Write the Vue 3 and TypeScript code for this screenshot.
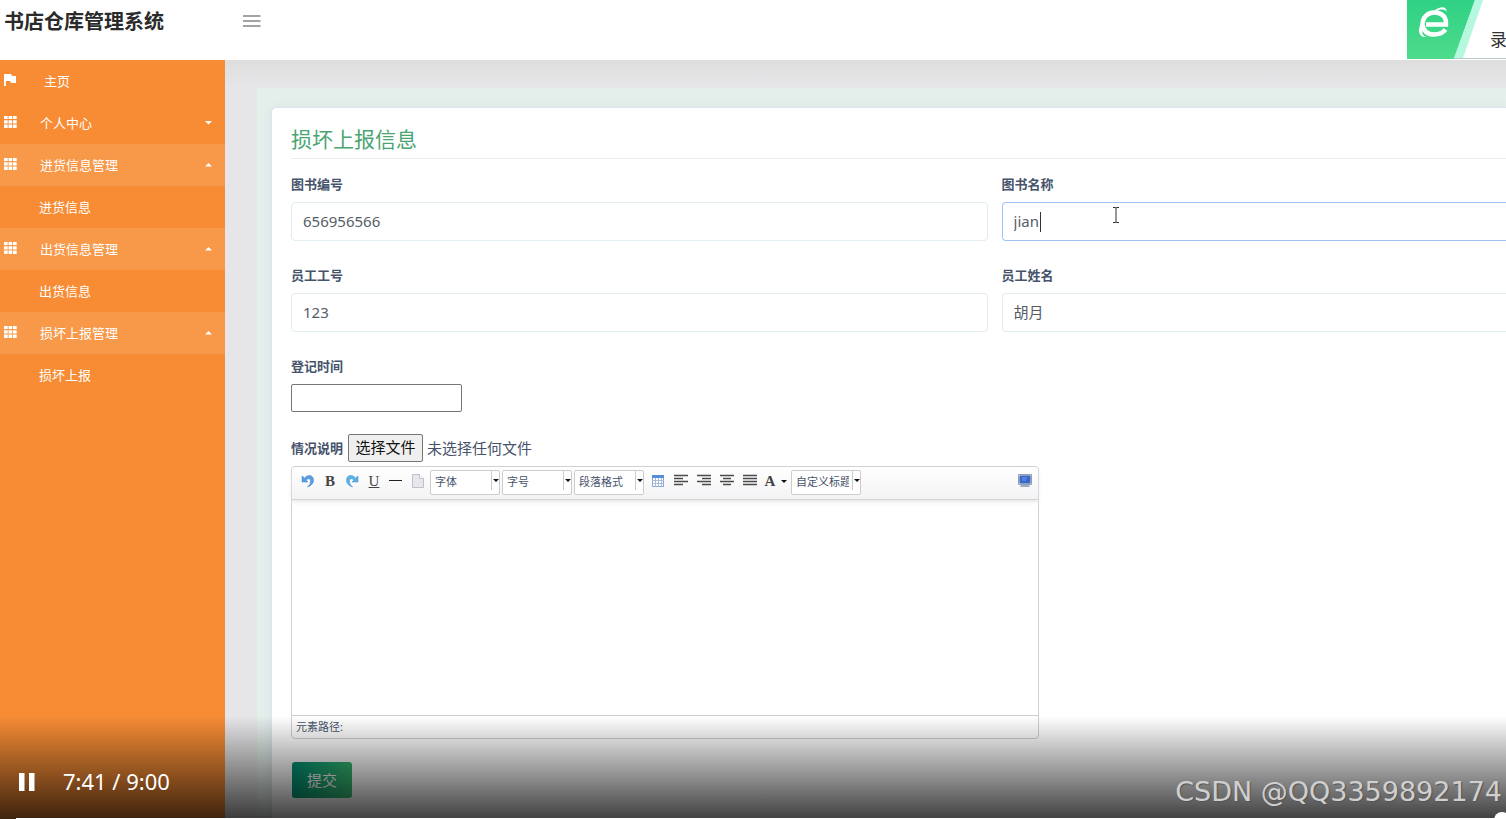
<script setup lang="ts">
import { ref } from 'vue'

interface MenuEntry {
  text: string
  kind: 'home' | 'group' | 'child'
  open?: boolean
}

const menu: MenuEntry[] = [
  { text: '主页', kind: 'home' },
  { text: '个人中心', kind: 'group' },
  { text: '进货信息管理', kind: 'group', open: true },
  { text: '进货信息', kind: 'child' },
  { text: '出货信息管理', kind: 'group', open: true },
  { text: '出货信息', kind: 'child' },
  { text: '损坏上报管理', kind: 'group', open: true },
  { text: '损坏上报', kind: 'child' },
]

const fields = ref([
  { id: 'book-no', label: '图书编号', value: '656956566' },
  { id: 'book-name', label: '图书名称', value: 'jian', active: true },
  { id: 'staff-no', label: '员工工号', value: '123' },
  { id: 'staff-name', label: '员工姓名', value: '胡月' },
])
const date = ref('')

const aligns = [
  { name: '左对齐', d: 'M0 1.5h14M0 4.5h9M0 7.5h14M0 10.5h9' },
  { name: '右对齐', d: 'M0 1.5h14M5 4.5h9M0 7.5h14M5 10.5h9' },
  { name: '居中对齐', d: 'M0 1.5h14M3 4.5h8M0 7.5h14M3 10.5h8' },
  { name: '两端对齐', d: 'M0 1.5h14M0 4.5h14M0 7.5h14M0 10.5h14' },
]
</script>

<template>
  <div class="page">
    <header class="topbar">
      <h1 class="brand">书店仓库管理系统</h1>
      <button class="burger" type="button" aria-label="菜单">
        <svg width="18" height="12" viewBox="0 0 18 12"><path d="M0 1h17.500M0 6h17.500M0 11h17.500" stroke="#858585" stroke-width="1.700" /></svg>
      </button>
      <div class="recorder">
        <svg width="99" height="60" viewBox="0 0 99 60">
          <defs>
            <linearGradient id="green" x1="0" y1="0" x2="0" y2="1">
              <stop offset="0" stop-color="#2fd184" />
              <stop offset="1" stop-color="#4edb8c" />
            </linearGradient>
          </defs>
          <path d="M0 0H68L47 59H0Z" fill="url(#green)" />
          <path d="M68 0H76L56 58H47Z" fill="#b5f7df" />
          <path d="M47 58.500H99" stroke="#b9c8c2" />
          <path d="M19 24.500H39C39.500 17 35 12.500 27.500 12.500C20 12.500 15.500 18 15.500 24C15.500 30.500 20.500 34.500 27 34.500C32 34.500 36 33 38.500 29.500" fill="none" stroke="#fff" stroke-width="4.500" />
          <path d="M27 11C33 6 40 6 39.500 12C38 9 34 9 30 11ZM14 23C10 31 12 38 20 37C15 36 14 32 17 28Z" fill="#fff" />
        </svg>
        <span class="recorder-text">录</span>
      </div>
    </header>

    <div class="body">
      <nav class="sidebar">
        <a v-for="m in menu" :key="m.text" href="#" class="item" :class="[m.kind, { open: m.open }]">
          <svg v-if="m.kind === 'home'" class="icon" width="13" height="13" viewBox="0 0 13 13"><path d="M0 0H7L8 2H12V9H7L6 7H2V12H0Z" fill="#fff" /></svg>
          <svg v-if="m.kind === 'group'" class="icon" width="13" height="12" viewBox="0 0 13 12"><path d="M0 0H3.700V3H0ZM4.500 0H8.200V3H4.500ZM9 0H12.700V3H9ZM0 4.300H3.700V7.500H0ZM4.500 4.300H8.200V7.500H4.500ZM9 4.300H12.700V7.500H9ZM0 8.600H3.700V12H0ZM4.500 8.600H8.200V12H4.500ZM9 8.600H12.700V12H9Z" fill="#fff" /></svg>
          <span>{{ m.text }}</span>
          <svg v-if="m.kind === 'group'" class="caret" width="7" height="4" viewBox="0 0 7 4"><path :d="m.open ? 'M0 3.500L3.500 0L7 3.500Z' : 'M0 0L3.500 3.500L7 0Z'" fill="#fff" /></svg>
        </a>
      </nav>

      <main class="content">
        <div class="panel">
          <form class="card" @submit.prevent>
            <h2 class="title">损坏上报信息</h2>
            <div class="grid">
              <div v-for="f in fields" :key="f.id" class="field" :class="{ active: f.active }">
                <label :for="f.id">{{ f.label }}</label>
                <input :id="f.id" v-model="f.value" class="control" type="text" autocomplete="off" spellcheck="false">
              </div>
            </div>
            <div class="field date-field">
              <label for="date">登记时间</label>
              <input id="date" v-model="date" class="date" type="text">
            </div>
            <div class="file-row">
              <label for="file">情况说明</label>
              <button id="file" class="file" type="button">选择文件</button>
              <span class="file-name">未选择任何文件</span>
            </div>

            <section class="editor">
              <div class="toolbar">
                <button class="tool" type="button" aria-label="撤销">
                  <svg width="14" height="14" viewBox="0 0 14 14"><path d="M1 2V8H7L5 6C8 3.500 10 5 9.500 8C9.300 10 8 11.500 6.500 13C10 12 13 9 12.500 5.500C12 1 7 0 3.500 4Z" fill="#5b9fe0" stroke="#3e7fc4" stroke-width=".5" /></svg>
                </button>
                <button class="tool letter" type="button">B</button>
                <button class="tool" type="button" aria-label="重做">
                  <svg width="14" height="14" viewBox="0 0 14 14"><path d="M13 2V8H7L9 6C6 3.500 4 5 4.500 8C4.700 10 6 11.500 7.500 13C4 12 1 9 1.500 5.500C2 1 7 0 10.500 4Z" fill="#5bb1e6" stroke="#3e8fca" stroke-width=".5" /></svg>
                </button>
                <button class="tool letter under" type="button">U</button>
                <button class="tool" type="button" aria-label="分隔线">
                  <svg width="14" height="14" viewBox="0 0 14 14"><path d="M0 6.500H13" stroke="#222" /></svg>
                </button>
                <button class="tool last" type="button" aria-label="新建">
                  <svg width="14" height="14" viewBox="0 0 14 14"><path d="M1.500 .5H8.500L12.500 4.500V13.500H1.500Z" fill="#e6e8ee" stroke="#bfc1c7" /><path d="M8.500 .5V4.500H12.500" fill="#fff" stroke="#bfc1c7" /></svg>
                </button>
                <button class="combo" type="button"><span>字体</span><i></i></button>
                <button class="combo" type="button"><span>字号</span><i></i></button>
                <button class="combo" type="button"><span>段落格式</span><i></i></button>
                <button class="tool wide" type="button" aria-label="表格">
                  <svg width="14" height="14" viewBox="0 0 14 14"><path d="M1.500 1.500H12.500V12.500H1.500Z" fill="#fff" stroke="#7fa2cf" /><path d="M1 1H13V4H1Z" fill="#568bdc" /><path d="M1 6.500H13M1 9.500H13M4.500 4V13M7.500 4V13M10.500 4V13" stroke="#a9bdd8" /></svg>
                </button>
                <button v-for="a in aligns" :key="a.name" class="tool wide" type="button" :aria-label="a.name">
                  <svg width="14" height="14" viewBox="0 0 14 14"><path :d="a.d" stroke="#4a4a4a" stroke-width="1.300" /></svg>
                </button>
                <button class="tool letter color" type="button">A<i class="arrow"></i></button>
                <button class="combo" type="button"><span>自定义标题</span><i></i></button>
                <button class="tool screen" type="button" aria-label="全屏">
                  <svg width="14" height="14" viewBox="0 0 14 14"><path d="M.5 .5H13.500V10.500H.5Z" fill="#c8d1de" stroke="#8fa0b8" /><path d="M2 2H12V9H2Z" fill="#3567cf" stroke="#4a6cb4" /><path d="M4 4H9M4 6H8" stroke="#6f9cf0" /><path d="M3 11H11L12 13H2Z" fill="#9facc0" /></svg>
                </button>
              </div>
              <textarea class="area" aria-label="情况说明内容"></textarea>
              <div class="path">元素路径:</div>
            </section>

            <button class="submit" type="submit">提交</button>
          </form>
        </div>
      </main>
    </div>

    <svg class="pointer" width="8" height="16" viewBox="0 0 8 16"><path d="M1 .5H3.500Q4 .5 4 1.500V14.500Q4 15.500 3.500 15.500H1M7 .5H4.500Q4 .5 4 1.500M7 15.500H4.500Q4 15.500 4 14.500" fill="none" stroke="#333" /></svg>

    <div class="player">
      <button class="pause" type="button" aria-label="暂停">
        <svg width="16" height="18" viewBox="0 0 16 18"><path d="M0 0H5.500V18H0ZM10 0H15.500V18H10Z" fill="#fff" /></svg>
      </button>
      <span class="time">7:41 / 9:00</span>
      <span class="mark">CSDN @QQ3359892174</span>
      <div class="track"></div>
      <div class="knob"></div>
    </div>
  </div>
</template>

<style>
body {
  margin: 0;
}
</style>

<style scoped>
.page {
  position: relative;
  display: flex;
  flex-direction: column;
  height: 100vh;
  overflow: hidden;
  background: #fff;
  color: #46536a;
  font-family: "Noto Sans", "Noto Sans CJK SC", sans-serif;
}
.page * {
  box-sizing: border-box;
}
button,
input,
textarea {
  font-family: inherit;
  margin: 0;
}
button {
  padding: 0;
  border: 0;
  background: none;
}
svg {
  display: block;
}
.topbar {
  flex: none;
  display: flex;
  align-items: flex-start;
  height: 60px;
}
.brand {
  width: 243px;
  margin: 0;
  padding: 7px 0 0 4px;
  font-size: 20px;
  line-height: 30px;
  font-weight: 700;
  color: #2b2b2b;
}
.burger {
  padding-top: 15px;
}
.recorder {
  position: relative;
  margin-left: auto;
  width: 99px;
  height: 60px;
  overflow: hidden;
}
.recorder-text {
  position: absolute;
  left: 83px;
  top: 29px;
  font-size: 17px;
  line-height: 22px;
  color: #333;
}
.body {
  flex: 1;
  min-height: 0;
  display: flex;
}
.sidebar {
  flex: none;
  width: 225px;
  background: #f78c35;
}
.item {
  display: flex;
  align-items: center;
  height: 42px;
  padding: 0 13px 0 4px;
  color: #fff;
  font-size: 13px;
  line-height: 20px;
  text-decoration: none;
}
.item.open {
  background: #f89849;
}
.icon {
  flex: none;
  margin: 0 23px 2px 0;
}
.item.home .icon {
  margin-right: 27px;
}
.item.child {
  padding-left: 39px;
}
.caret {
  margin-left: auto;
}
.content {
  flex: 1;
  min-width: 0;
  display: flex;
  padding: 28px 0 0 32px;
  background: linear-gradient(#dededf, #e6e5e7 28px);
}
.panel {
  flex: 1;
  min-width: 0;
  padding: 20px 0 0 15px;
  background: #e4eeeb;
}
.card {
  height: 100%;
  padding: 14px 0 0 19px;
  background: #fff;
  border-radius: 4px 0 0 0;
  outline: 1px solid #dbe7ee;
  box-shadow: 0 0 8px #d6e2e3;
}
.title {
  margin: 0 0 15px;
  padding-bottom: 2px;
  border-bottom: 1px solid #e8eef0;
  font-size: 21px;
  line-height: 34px;
  font-weight: 400;
  color: #4aa573;
}
.grid {
  display: grid;
  grid-template-columns: 58fr 42fr;
  column-gap: 14px;
  row-gap: 24px;
}
label {
  font-size: 13px;
  line-height: 20px;
  font-weight: 700;
}
.field {
  position: relative;
}
.field label {
  display: block;
  margin-bottom: 8px;
}
.control {
  display: block;
  width: 100%;
  height: 39px;
  padding: 0 12px 2px 11px;
  border: 1px solid #e2edf2;
  border-radius: 4px;
  background: #fff;
  font-size: 15px;
  color: #555d66;
  outline: none;
}
.field:nth-child(even) .control {
  border-right: 0;
  border-radius: 4px 0 0 4px;
}
.active .control {
  border-color: #9cc5f2;
}
/* text cursor of the active field */
.active::after {
  content: "";
  position: absolute;
  left: 38px;
  bottom: 9px;
  width: 1px;
  height: 20px;
  background: #333;
}
.date-field {
  margin-top: 24px;
}
.date {
  display: block;
  width: 171px;
  height: 28px;
  border: 1px solid #767676;
  border-radius: 2px;
  font-size: 15px;
}
.file-row {
  display: flex;
  align-items: center;
  margin: 22px 0 4px;
}
.file {
  width: 75px;
  height: 28px;
  margin: 0 4px 0 5px;
  padding-bottom: 2px;
  border: 1px solid #767676;
  border-radius: 2px;
  background: #efefef;
  font-size: 15px;
  line-height: 22px;
  color: #111;
}
.file-name {
  font-size: 15px;
  line-height: 20px;
}
.editor {
  width: 748px;
  max-width: 100%;
  border: 1px solid #cfcfd2;
  border-radius: 4px;
}
.toolbar {
  display: flex;
  height: 33px;
  padding: 3px 2px 0 5px;
  border-bottom: 1px solid #d3d3d6;
  border-radius: 4px 4px 0 0;
  background: linear-gradient(#fff, #f3f3f5);
  box-shadow: 0 2px 4px #e6e6e8;
}
.tool {
  display: flex;
  flex: none;
  align-items: center;
  justify-content: center;
  width: 22px;
  height: 22px;
}
.tool.last {
  margin-right: 1px;
}
.tool.wide {
  width: 23px;
}
.letter {
  font: 700 15px/22px "Liberation Serif", serif;
  color: #444;
}
.under {
  font-weight: 400;
  text-decoration: underline;
}
.tool.color {
  width: 30px;
  gap: 6px;
}
.screen {
  margin-left: auto;
}
.combo {
  display: flex;
  flex: none;
  width: 70px;
  height: 25px;
  margin-right: 2px;
  padding-left: 4px;
  border: 1px solid #ccc;
  border-radius: 2px;
  background: #fff;
  color: #46536a;
  font-size: 11px;
  line-height: 22px;
  text-align: left;
}
.combo span {
  flex: 1;
  margin-right: 3px;
  overflow: hidden;
  white-space: nowrap;
}
.combo i {
  width: 8px;
  height: 19px;
  border-left: 1px solid #ccc;
  display: flex;
  align-items: center;
  justify-content: center;
}
.combo i::after,
.arrow::after {
  content: "";
  display: block;
  border: 3px solid transparent;
  border-top-color: #111;
  border-bottom: 0;
}
.area {
  display: block;
  width: 100%;
  height: 215px;
  padding: 8px;
  border: 0;
  background: transparent;
  resize: none;
  outline: none;
}
.path {
  height: 23px;
  padding-left: 4px;
  border-top: 1px solid #cfcfd2;
  font-size: 11px;
  line-height: 22px;
}
.submit {
  width: 60px;
  height: 36px;
  margin: 23px 0 0 1px;
  padding-bottom: 2px;
  border-radius: 3px;
  background: linear-gradient(100deg, #009174, #3bbb72);
  color: #fff;
  font-size: 15px;
}
.pointer {
  position: absolute;
  left: 1112px;
  top: 207px;
}
.player {
  position: absolute;
  left: 0;
  right: 0;
  bottom: 0;
  display: flex;
  align-items: center;
  height: 103px;
  padding: 28px 4px 0 19px;
  background: linear-gradient(transparent, rgba(0, 0, 0, 0.75));
  overflow: hidden;
}
.time {
  margin-left: 28px;
  padding-bottom: 2px;
  font-size: 22px;
  line-height: 30px;
  color: #fff;
}
.mark {
  margin-left: auto;
  padding-top: 20px;
  font: 27px/32px "DejaVu Sans", sans-serif;
  color: #cfcfcf;
  text-shadow: 1px 1px 1px #555;
}
.track {
  position: absolute;
  left: 16px;
  right: 0;
  bottom: 0;
  height: 1px;
  background: #fff;
}
.knob {
  position: absolute;
  right: -4px;
  bottom: -9px;
  width: 16px;
  height: 16px;
  border-radius: 50%;
  background: #fff;
}
</style>
